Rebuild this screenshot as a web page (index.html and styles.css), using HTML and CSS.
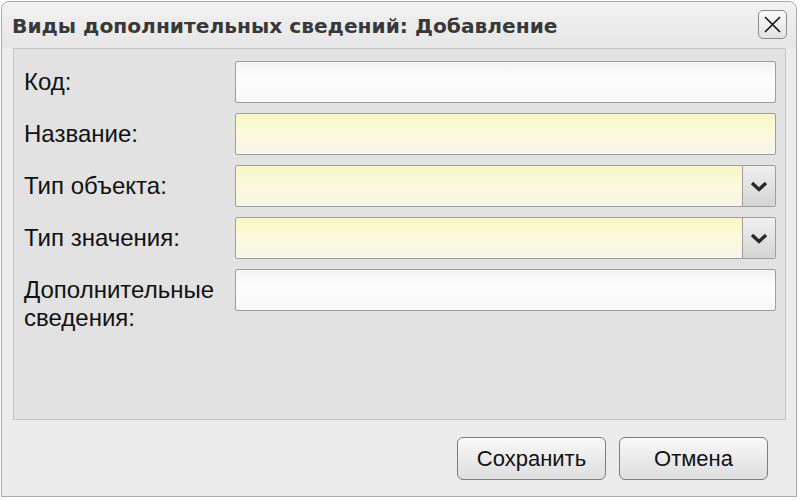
FILE: index.html
```html
<!DOCTYPE html>
<html lang="ru">
<head>
<meta charset="utf-8">
<link rel="stylesheet" href="styles.css">
</head>
<body>
<div class="window">
  <div class="titlebar">
    <div class="title">Виды дополнительных сведений: Добавление</div>
    <button class="close" aria-label="Закрыть">
      <svg width="19" height="19" viewBox="0 0 19 19"><path d="M2 2 L17 17 M17 2 L2 17" stroke="#1a1a1a" stroke-width="1.7" fill="none"/></svg>
    </button>
  </div>
  <div class="panel">
    <div class="row">
      <label class="label">Код:</label>
      <div class="field"></div>
    </div>
    <div class="row">
      <label class="label">Название:</label>
      <div class="field req"></div>
    </div>
    <div class="row">
      <label class="label">Тип объекта:</label>
      <div class="field req combo"><span class="input"></span><span class="trigger"><svg width="18" height="11" viewBox="0 0 18 11"><path d="M2 2 L9 8.5 L16 2" stroke="#2a2a2a" stroke-width="3.4" fill="none"/></svg></span></div>
    </div>
    <div class="row">
      <label class="label">Тип значения:</label>
      <div class="field req combo"><span class="input"></span><span class="trigger"><svg width="18" height="11" viewBox="0 0 18 11"><path d="M2 2 L9 8.5 L16 2" stroke="#2a2a2a" stroke-width="3.4" fill="none"/></svg></span></div>
    </div>
    <div class="row">
      <label class="label">Дополнительные сведения:</label>
      <div class="field"></div>
    </div>
  </div>
  <div class="footer">
    <button class="btn">Сохранить</button>
    <button class="btn">Отмена</button>
  </div>
</div>
</body>
</html>
```
FILE: styles.css
```css
html, body {
  margin: 0;
  padding: 0;
  background: #ffffff;
}
body {
  font-family: "Liberation Sans", Arial, sans-serif;
  color: #111;
}
.window {
  margin: 1px 0 0 1px;
  width: 796px;
  height: 496px;
  box-sizing: border-box;
  border: 1px solid #a9a9a9;
  border-radius: 8px 8px 0 0;
  background: #ececec;
  display: flex;
  flex-direction: column;
}
.titlebar {
  height: 46px;
  display: flex;
  align-items: center;
  justify-content: space-between;
  padding: 0 9px 0 10px;
  background: linear-gradient(#f2f2f2, #e6e6e6);
  border-radius: 8px 8px 0 0;
}
.title {
  font-family: "DejaVu Sans", Verdana, sans-serif;
  font-weight: bold;
  font-size: 20.2px;
  color: #383838;
  margin-top: 1px;
}
.close {
  width: 29px;
  height: 29px;
  padding: 0;
  margin-top: -2px;
  border: 1px solid #8a8a8a;
  border-radius: 5px;
  background: linear-gradient(#fafafa, #e2e2e2);
  display: flex;
  align-items: center;
  justify-content: center;
}
.panel {
  margin: 0 10px 0 11px;
  height: 372px;
  box-sizing: border-box;
  border: 1px solid #c4c4c4;
  background: #e2e2e2;
  padding: 12px 9px 0 10px;
  display: flex;
  flex-direction: column;
  gap: 10px;
}
.row {
  display: flex;
  height: 42px;
}
.label {
  width: 211px;
  font-size: 24px;
  line-height: 28px;
  padding-top: 7px;
  color: #111;
}
.field {
  flex: 1;
  box-sizing: border-box;
  height: 42px;
  border: 1px solid #9e9e9e;
  border-radius: 2px;
  background: linear-gradient(#f2f2f2, #fdfdfd 40%, #f7f7f7);
}
.field.req {
  background: linear-gradient(#f7f7c4, #fafade 50%, #f6f6ea);
}
.combo {
  display: flex;
}
.combo .input {
  flex: 1;
}
.trigger {
  width: 32px;
  border-left: 1px solid #9e9e9e;
  border-radius: 0 3px 3px 0;
  background: linear-gradient(#f0f0f0, #d4d4d4);
  display: flex;
  align-items: center;
  justify-content: center;
}
.footer {
  flex: 1;
  display: flex;
  justify-content: flex-end;
  align-items: flex-start;
  gap: 13px;
  padding: 17px 28px 0 0;
}
.btn {
  width: 149px;
  height: 43px;
  border: 1px solid #7d7d7d;
  border-radius: 6px;
  background: linear-gradient(#f9f9f9, #ebebeb 50%, #dedede);
  font-family: "Liberation Sans", Arial, sans-serif;
  font-size: 22px;
  color: #111;
  padding: 0;
}
```
